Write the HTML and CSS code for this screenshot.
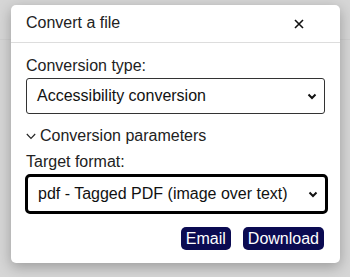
FILE: index.html
```html
<!DOCTYPE html>
<html lang="en">
<head>
<meta charset="utf-8">
<link rel="stylesheet" href="styles.css">
</head>
<body>
<div class="backdrop">
  <div class="dialog">
    <div class="header">
      <span class="title">Convert a file</span>
      <svg class="close" width="10" height="10" viewBox="0 0 10 10"><path d="M1 1L9 9M9 1L1 9" stroke="#111" stroke-width="1.6" fill="none"/></svg>
    </div>
    <div class="body">
      <div class="label">Conversion type:</div>
      <div class="select">
        <span>Accessibility conversion</span>
        <svg width="10" height="7" viewBox="0 0 10 7"><path d="M1.5 1.5L5 5L8.5 1.5" stroke="#111" stroke-width="2" fill="none"/></svg>
      </div>
      <div class="params">
        <svg width="10" height="7" viewBox="0 0 10 7"><path d="M0.8 1L5 5.5L9.2 1" stroke="#222" stroke-width="1.1" fill="none"/></svg>
        <span>Conversion parameters</span>
      </div>
      <div class="label label2">Target format:</div>
      <div class="select focused">
        <span>pdf - Tagged PDF (image over text)</span>
        <svg width="10" height="7" viewBox="0 0 10 7"><path d="M1.5 1.5L5 5L8.5 1.5" stroke="#111" stroke-width="2" fill="none"/></svg>
      </div>
      <div class="actions">
        <button class="btn">Email</button>
        <button class="btn">Download</button>
      </div>
    </div>
  </div>
</div>
</body>
</html>
```
FILE: styles.css
```css
html, body {
  margin: 0;
  padding: 0;
}
body {
  width: 350px;
  height: 277px;
  overflow: hidden;
  background: #d6d6d6;
  font-family: "Liberation Sans", Arial, sans-serif;
  color: #212121;
}
.backdrop {
  height: 277px;
  padding: 5px 10px 0 11px;
  box-sizing: border-box;
  background: linear-gradient(#d6d6d6 39px, #cfcfcf 39px, #cfcfcf 40px, #d6d6d6 40px);
}
.dialog {
  width: 329px;
  height: 258px;
  background: #fff;
  border-radius: 5px;
  box-shadow: 0 4px 14px rgba(0,0,0,0.28);
  display: flex;
  flex-direction: column;
}
.header {
  height: 37px;
  border-bottom: 1px solid #dddddd;
  display: flex;
  align-items: center;
  justify-content: space-between;
  padding: 0 36px 0 15px;
}
.title {
  font-size: 16px;
  color: #222;
  padding-bottom: 1px;
}
.close {
  display: block;
  margin-top: 1px;
}
.body {
  padding: 13px 15px 0 15px;
  display: flex;
  flex-direction: column;
}
.label {
  font-size: 16px;
  line-height: 19px;
  color: #222;
  height: 22px;
}
.select {
  height: 34px;
  border: 1px solid #333;
  border-radius: 3px;
  display: flex;
  align-items: center;
  justify-content: space-between;
  padding: 0 7px 0 10px;
  font-size: 16px;
  color: #111;
  width: 280px;
}
.select span {
  padding-bottom: 1px;
}
.params {
  display: flex;
  align-items: center;
  gap: 4px;
  font-size: 16px;
  line-height: 19px;
  color: #222;
  margin-top: 12px;
  height: 19px;
}
.params svg {
  margin-top: 1px;
}
.label2 {
  margin-top: 7px;
  height: 20px;
}
.focused {
  height: 34px;
  border: 3px solid #000;
  border-radius: 5px;
  margin-left: -1px;
  width: 280px;
  padding: 0 7px 0 10px;
  margin-top: 2px;
}
.actions {
  display: flex;
  justify-content: flex-end;
  gap: 12px;
  margin-top: 13px;
  padding-right: 1px;
}
.btn {
  font-family: "Liberation Sans", Arial, sans-serif;
  font-size: 16px;
  line-height: 19px;
  height: 23px;
  padding: 0 5px;
  background: #0b0b52;
  color: #fff;
  border: none;
  border-radius: 5px;
}
```
